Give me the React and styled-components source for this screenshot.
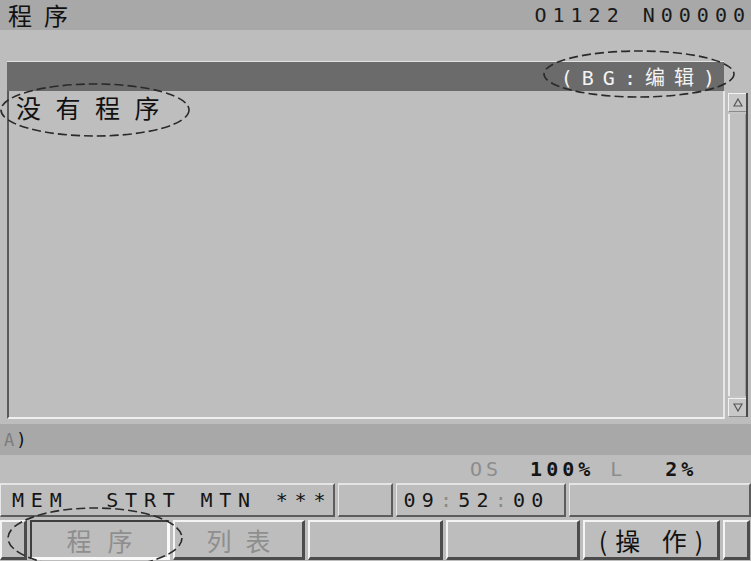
import styled, { createGlobalStyle } from "styled-components";

const GlobalStyle = createGlobalStyle`
  html, body {
    margin: 0;
    padding: 0;
    background: #bdbdbd;
  }
`

const cjk = `"Noto Sans CJK SC", "Noto Sans", sans-serif`
const mono = `"DejaVu Sans Mono", "Noto Sans CJK SC", monospace`

const Screen = styled.div`
  position: relative;
  width: 751px;
  height: 561px;
  overflow: hidden;
  background: #bdbdbd;
  display: flex;
  flex-direction: column;
`

const TitleBar = styled.div`
  height: 30px;
  background: #a8a8a8;
  display: flex;
  align-items: center;
  justify-content: space-between;
  padding-left: 8px;
`

const TitleText = styled.span`
  font-family: ${cjk};
  font-size: 24px;
  letter-spacing: 12px;
  color: #111;
  line-height: 1;
  white-space: nowrap;
`

const ProgNo = styled.span`
  font-family: ${mono};
  font-size: 20px;
  letter-spacing: 6px;
  color: #1a1a1a;
  white-space: nowrap;
`

const Band = styled.div`
  height: ${({h}) => h}px;
  background: ${({dark}) => dark ? '#a8a8a8' : '#bdbdbd'};
  display: flex;
  align-items: center;
`

const Frame = styled.div`
  margin-left: 7px;
  display: flex;
  flex-direction: column;
`

const HeaderBar = styled.div`
  width: 717px;
  height: 30px;
  background: #6b6b6b;
  border-top: 1px solid #e2e2e2;
  display: flex;
  align-items: center;
  justify-content: flex-end;
  box-sizing: border-box;
`

const HeaderText = styled.span`
  font-family: ${mono};
  font-size: 20px;
  letter-spacing: 9px;
  color: #f4f4f4;
  white-space: nowrap;
`

const BodyRow = styled.div`
  display: flex;
  height: 328px;
`

const ListArea = styled.div`
  width: 718px;
  box-sizing: border-box;
  border-left: 2px solid #5a5a5a;
  border-bottom: 2px solid #f0f0f0;
  border-right: 2px solid #e6e6e6;
  background: #bebebe;
  padding: 1px 0 0 7px;
`

const EmptyText = styled.div`
  font-family: ${cjk};
  font-size: 25px;
  letter-spacing: 14.5px;
  color: #111;
  line-height: 30px;
`

const ScrollBar = styled.div`
  width: 18px;
  margin-left: 3px;
  margin-top: 2px;
  margin-bottom: 2px;
  display: flex;
  flex-direction: column;
  border-right: 2px solid #4a4a4a;
  background: #c4c4c4;
`

const ScrollBtn = styled.div`
  height: 17px;
  display: flex;
  align-items: center;
  justify-content: center;
  background: #c8c8c8;
  border-top: 1px solid #f2f2f2;
  border-left: 1px solid #f2f2f2;
  border-bottom: 1px solid #8a8a8a;
`

const ScrollTrack = styled.div`
  flex: 1;
  margin: 2px 0;
  border-left: 2px solid #ececec;
  border-right: 1px solid #9a9a9a;
  background: #c0c0c0;
`

const Prompt = styled.span`
  font-family: ${mono};
  font-size: 17px;
  margin-left: 4px;
  color: #7c7c7c;
  b {
    color: #111;
    font-weight: normal;
    margin-left: 2px;
  }
`

const Info = styled.span`
  display: inline-block;
  font-family: ${mono};
  font-size: 20px;
  letter-spacing: 4px;
  margin-left: ${({left}) => left}px;
  color: ${({dim}) => dim ? '#8c8c8c' : '#151515'};
  font-weight: ${({dim}) => dim ? 'normal' : 'bold'};
  white-space: nowrap;
`

const StatusRow = styled.div`
  height: 34px;
  display: flex;
  gap: 3px;
`

const Cell = styled.div`
  width: ${({w}) => w}px;
  box-sizing: border-box;
  border-top: 2px solid #e4e4e4;
  border-bottom: 2px solid #5c5c5c;
  border-right: 2px solid #5c5c5c;
  border-left: 1px solid #e8e8e8;
  background: #bdbdbd;
  display: flex;
  align-items: center;
  padding-left: ${({pad}) => pad || 0}px;
  font-family: ${mono};
  font-size: 20px;
  letter-spacing: ${({spacing}) => spacing ?? 6.2}px;
  color: #151515;
  white-space: pre;
  overflow: hidden;
`

const Dim = styled.span`
  color: #8a8a8a;
`

const KeyRow = styled.div`
  height: 40px;
  margin-top: 3px;
  display: flex;
  gap: 3px;
`

const Key = styled.div`
  width: ${({w}) => w}px;
  box-sizing: border-box;
  background: #bdbdbd;
  border-top: 2px solid ${({selected}) => selected ? '#3e3e3e' : '#f4f4f4'};
  border-left: 2px solid ${({selected}) => selected ? '#3e3e3e' : '#f4f4f4'};
  border-right: 3px solid ${({selected}) => selected ? '#fafafa' : '#4c4c4c'};
  border-bottom: 3px solid ${({selected}) => selected ? '#fafafa' : '#4c4c4c'};
  display: flex;
  align-items: center;
  justify-content: center;
  font-family: ${cjk};
  font-size: 25px;
  letter-spacing: ${({spacing}) => spacing ?? 14}px;
  padding-left: ${({spacing}) => spacing ?? 14}px;
  color: ${({dim}) => dim ? '#8e8e8e' : '#111'};
  white-space: pre;
`

const Marks = styled.svg`
  position: absolute;
  left: 0;
  top: 0;
  pointer-events: none;
`

const Arrow = ({up}) => (
  <svg width="10" height="9" viewBox="0 0 10 9">
    <polygon
      points={up ? "5,1 9,8 1,8" : "1,1 9,1 5,8"}
      fill="none"
      stroke="#555"
      strokeWidth="1.2"
    />
  </svg>
)

export default function App() {
  return (
    <>
      <GlobalStyle />
      <Screen>
        <TitleBar>
          <TitleText>程序</TitleText>
          <ProgNo>O1122 N00000</ProgNo>
        </TitleBar>
        <Band h={31} />
        <Frame>
          <HeaderBar>
            <HeaderText>(BG:编辑)</HeaderText>
          </HeaderBar>
          <BodyRow>
            <ListArea>
              <EmptyText>没有程序</EmptyText>
            </ListArea>
            <ScrollBar>
              <ScrollBtn><Arrow up /></ScrollBtn>
              <ScrollTrack />
              <ScrollBtn><Arrow /></ScrollBtn>
            </ScrollBar>
          </BodyRow>
        </Frame>
        <Band h={5} />
        <Band h={31} dark>
          <Prompt>A<b>)</b></Prompt>
        </Band>
        <Band h={28}>
          <Info dim left={470}>OS</Info>
          <Info left={28}>100%</Info>
          <Info dim left={16}>L</Info>
          <Info left={39}>2%</Info>
        </Band>
        <StatusRow>
          <Cell w={336} pad={11} spacing={6.8}>MEM  STRT MTN ***</Cell>
          <Cell w={56} />
          <Cell w={170} pad={6}>09<Dim>:</Dim>52<Dim>:</Dim>00</Cell>
          <Cell w={183} />
        </StatusRow>
        <KeyRow>
          <Key w={27} />
          <Key w={140} selected dim spacing={16}>程序</Key>
          <Key w={132} dim>列表</Key>
          <Key w={135} />
          <Key w={134} />
          <Key w={137} spacing={8}>(操 作)</Key>
          <Key w={27} />
        </KeyRow>
        <Marks width="751" height="561" viewBox="0 0 751 561">
          <g fill="none" stroke="#2a2a2a" strokeWidth="1.6" strokeDasharray="9 4">
            <ellipse cx="95" cy="110" rx="94" ry="26" />
            <ellipse cx="639" cy="74" rx="95" ry="23" />
            <ellipse cx="95" cy="538" rx="87" ry="30" />
          </g>
        </Marks>
      </Screen>
    </>
  );
}
